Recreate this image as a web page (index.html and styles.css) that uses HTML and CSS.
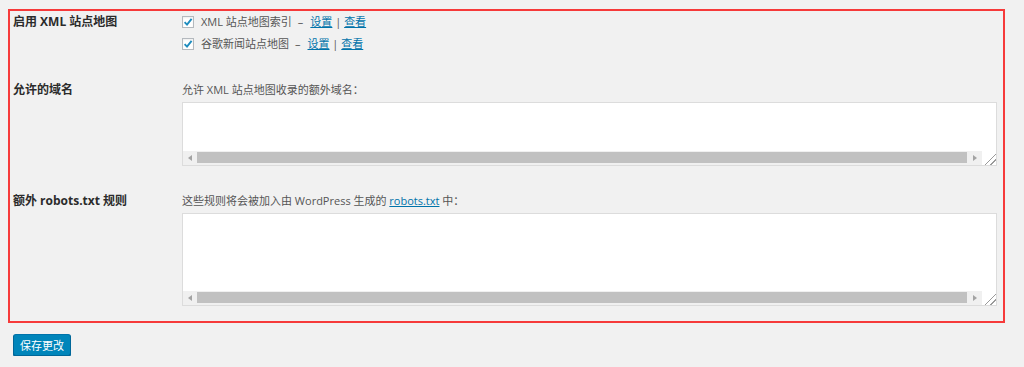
FILE: index.html
```html
<!DOCTYPE html>
<html lang="zh-CN">
<head>
    <meta charset="UTF-8">
    <meta name="viewport" content="width=device-width, initial-scale=1.0">
    <title>XML 站点地图设置</title>
    <link rel="stylesheet" href="styles.css">
</head>
<body>
    <div class="wrap">
        <div class="settings">
            <div class="row row-sitemaps">
                <div class="label">启用 XML 站点地图</div>
                <div class="field">
                    <div class="check-line"><span class="checkbox"><svg viewBox="0 0 12 12" width="12" height="12"><path d="M2.6 6.2 L5 8.6 L9.6 2.8" fill="none" stroke="#1e8cbe" stroke-width="1.9"/></svg></span>XML 站点地图索引<span class="dash">–</span><a href="#">设置</a> | <a href="#">查看</a></div>
                    <div class="check-line"><span class="checkbox"><svg viewBox="0 0 12 12" width="12" height="12"><path d="M2.6 6.2 L5 8.6 L9.6 2.8" fill="none" stroke="#1e8cbe" stroke-width="1.9"/></svg></span>谷歌新闻站点地图<span class="dash">–</span><a href="#">设置</a> | <a href="#">查看</a></div>
                </div>
            </div>

            <div class="row">
                <div class="label">允许的域名</div>
                <div class="field">
                    <div class="desc">允许 XML 站点地图收录的额外域名：</div>
                    <div class="textbox short">
                        <div class="text-area"></div>
                        <div class="hscroll">
                            <span class="arrow left"></span>
                            <span class="thumb"></span>
                            <span class="arrow right"></span>
                            <span class="resizer"></span>
                        </div>
                    </div>
                </div>
            </div>

            <div class="row">
                <div class="label">额外 robots.txt 规则</div>
                <div class="field">
                    <div class="desc">这些规则将会被加入由 WordPress 生成的 <a href="#">robots.txt</a> 中：</div>
                    <div class="textbox tall">
                        <div class="text-area"></div>
                        <div class="hscroll">
                            <span class="arrow left"></span>
                            <span class="thumb"></span>
                            <span class="arrow right"></span>
                            <span class="resizer"></span>
                        </div>
                    </div>
                </div>
            </div>
        </div>

        <button class="save-button">保存更改</button>
    </div>
</body>
</html>
```

FILE: styles.css
```css
* {
    margin: 0;
    padding: 0;
    box-sizing: border-box;
}

body {
    font-family: "Open Sans", "Noto Sans CJK SC", sans-serif;
    font-size: 11px;
    color: #555;
    background: #f1f1f1;
}

a {
    color: #0073aa;
    text-decoration: underline;
}

.wrap {
    padding: 9px 19px 0 8px;
}

.settings {
    border: 2px solid #f63a3a;
    padding: 0 6px 15px 3px;
}

.row {
    display: grid;
    grid-template-columns: 169px 1fr;
    margin-top: 24px;
}

.row-sitemaps {
    margin-top: 0;
}

.label {
    font-size: 12px;
    font-weight: bold;
    color: #2b2b2b;
    line-height: 22px;
}

.check-line {
    height: 22px;
    line-height: 22px;
}

.checkbox {
    display: inline-block;
    vertical-align: middle;
    width: 12px;
    height: 12px;
    margin: -2px 7px 0 0;
    background: #fff;
    border: 1px solid #b4b9be;
    box-shadow: inset 0 1px 2px rgba(0, 0, 0, 0.07);
}

.checkbox svg {
    display: block;
    margin: -1px;
}

.dash {
    margin: 0 7px 0 6px;
}

.desc {
    line-height: 22px;
}

.textbox {
    margin-top: 1px;
    border: 1px solid #dcdcdc;
    background: #fff;
    display: flex;
    flex-direction: column;
}

.textbox.short { height: 64px; }
.textbox.tall { height: 93px; }

.text-area {
    flex: 1;
    background: #fff;
}

.hscroll {
    display: flex;
    height: 14px;
    background: #f0f0f0;
}

.arrow {
    width: 14px;
    display: flex;
    align-items: center;
    justify-content: center;
}

.arrow.right {
    width: 15px;
}

.arrow::before {
    content: "";
    border-top: 3px solid transparent;
    border-bottom: 3px solid transparent;
}

.arrow.left::before {
    border-right: 4px solid #a3a3a3;
}

.arrow.right::before {
    border-left: 4px solid #a3a3a3;
}

.thumb {
    flex: 1;
    height: 11px;
    margin-top: 1px;
    background: #c1c1c1;
}

.resizer {
    width: 14px;
    background: #fff;
    background-image:
        linear-gradient(135deg, transparent 58%, #9a9a9a 58%, #9a9a9a 64%, transparent 64%, transparent 78%, #9a9a9a 78%, #9a9a9a 84%, transparent 84%);
}

.save-button {
    margin: 11px 0 0 5px;
    width: 58px;
    height: 22px;
    font-family: "Open Sans", "Noto Sans CJK SC", sans-serif;
    font-size: 11px;
    color: #fff;
    background: #0085ba;
    border: 1px solid #0073aa;
    border-color: #0073aa #006799 #006799;
    border-radius: 3px;
    box-shadow: 0 1px 0 #006799;
    cursor: pointer;
}
```
